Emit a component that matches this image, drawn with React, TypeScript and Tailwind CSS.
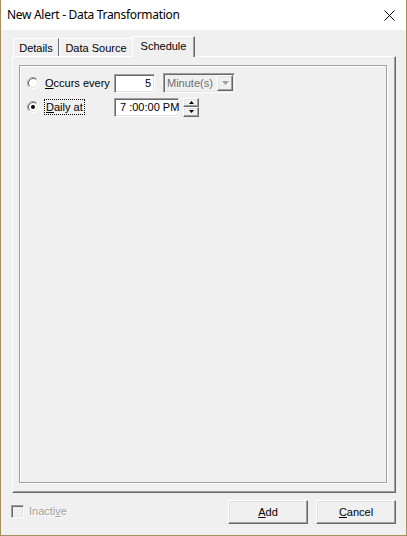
import React from "react";

const sunken =
  "border border-t-[#a0a0a0] border-l-[#a0a0a0] border-r-white border-b-white shadow-[inset_1px_1px_0_#696969,inset_-1px_-1px_0_#e3e3e3]";
const raised =
  "border border-t-white border-l-white border-r-[#696969] border-b-[#696969] shadow-[inset_-1px_-1px_0_#a0a0a0,inset_1px_1px_0_#e3e3e3]";

function Radio({ checked }: { checked?: boolean }) {
  return (
    <svg width="12" height="12" viewBox="0 0 12 12" className="shrink-0">
      <circle cx="6" cy="6" r="5" fill="#ffffff" />
      <path d="M2.11 9.89 A5.5 5.5 0 0 1 9.89 2.11" fill="none" stroke="#a0a0a0" strokeWidth="1" />
      <path d="M9.89 2.11 A5.5 5.5 0 0 1 2.11 9.89" fill="none" stroke="#ffffff" strokeWidth="1" />
      <path d="M2.82 9.18 A4.5 4.5 0 0 1 9.18 2.82" fill="none" stroke="#696969" strokeWidth="1" />
      <path d="M9.18 2.82 A4.5 4.5 0 0 1 2.82 9.18" fill="none" stroke="#e3e3e3" strokeWidth="1" />
      {checked && <circle cx="6" cy="6" r="2" fill="#000000" />}
    </svg>
  );
}

export default function App() {
  return (
    <div className="w-[407px] h-[536px] border-l border-r border-b border-[#a4905e] bg-[#f0f0f0] flex flex-col font-['Liberation_Sans',Arial,sans-serif] text-[11px] text-black overflow-hidden">
      {/* Title bar */}
      <div className="h-[30px] bg-white flex items-center justify-between pl-[6px] pr-[11px] shrink-0">
        <span className="font-['Noto_Sans',sans-serif] text-[12px] tracking-[-0.3px] leading-none">
          New Alert - Data Transformation
        </span>
        <svg width="11" height="11" viewBox="0 0 11 11">
          <path d="M0.5 0.5 L10.5 10.5 M10.5 0.5 L0.5 10.5" stroke="#000" strokeWidth="1" />
        </svg>
      </div>

      {/* Body */}
      <div className="flex-1 flex flex-col pl-[11px] pr-[10px] pt-[6px]">
        {/* Tabs */}
        <div className="h-[20px] flex items-end pl-[1px] whitespace-nowrap">
          <div className="w-[46px] h-[18px] border-t border-l border-white border-r border-r-[#696969] flex items-center justify-center pt-[1px]">
            Details
          </div>
          <div className="w-[73px] h-[18px] border-t border-l border-white flex items-center justify-center pt-[1px]">
            Data Source
          </div>
          <div className="relative z-10 w-[63px] h-[21px] -mb-[1px] bg-[#f0f0f0] border-t border-l border-white border-r border-r-[#696969] shadow-[inset_-1px_0_0_#a0a0a0] flex items-center justify-center pb-[1px]">
            Schedule
          </div>
        </div>

        {/* Panel */}
        <div className="w-[384px] h-[437px] border border-t-white border-l-white border-r-[#696969] border-b-[#696969] shadow-[inset_-1px_-1px_0_#a0a0a0] pl-[6px] pt-[8px] pr-[8px] pb-[9px] flex">
          <div className="flex-1 border border-[#a0a0a0] shadow-[1px_1px_0_#ffffff,inset_1px_1px_0_#ffffff] flex flex-col pt-[7px] pl-[7px] gap-[4px] whitespace-nowrap">
            {/* Row 1 */}
            <div className="flex items-center h-[20px]">
              <div className="w-[87px] flex items-center">
                <Radio />
                <span className="ml-[6px]">
                  <span className="underline">O</span>ccurs every
                </span>
              </div>
              <div className={`w-[41px] h-[19px] bg-white ${sunken} flex items-center justify-end pr-[3px]`}>5</div>
              <div className={`ml-[8px] w-[72px] h-[20px] ${sunken} flex items-center`}>
                <span className="pl-[3px] flex-1 text-[#6d6d6d]">Minute(s)</span>
                <div className={`w-[16px] h-[16px] mr-[1px] ${raised} flex items-center justify-center`}>
                  <svg width="7" height="4" viewBox="0 0 7 4">
                    <path d="M0 0 L7 0 L3.5 4 Z" fill="#a0a0a0" />
                  </svg>
                </div>
              </div>
            </div>
            {/* Row 2 */}
            <div className="flex items-center h-[20px]">
              <div className="w-[87px] flex items-center">
                <Radio checked />
                <span className="ml-[5px] border border-dotted border-black px-[1px] leading-[14px]">
                  <span className="underline">D</span>aily at
                </span>
              </div>
              <div className={`w-[65px] h-[19px] bg-white ${sunken} flex items-center pl-[5px]`}>
                7 :00:00 PM
              </div>
              <div className="ml-[4px] w-[16px] h-[19px] flex flex-col">
                <div className={`h-[9px] ${raised} flex items-center justify-center`}>
                  <svg width="5" height="3" viewBox="0 0 5 3">
                    <path d="M0 3 L5 3 L2.5 0 Z" fill="#000" />
                  </svg>
                </div>
                <div className={`h-[10px] ${raised} flex items-center justify-center`}>
                  <svg width="5" height="3" viewBox="0 0 5 3">
                    <path d="M0 0 L5 0 L2.5 3 Z" fill="#000" />
                  </svg>
                </div>
              </div>
            </div>
          </div>
        </div>

        {/* Bottom row */}
        <div className="mt-[7px] h-[24px] flex items-start">
          <div className="-ml-[1px] mt-[3px] flex items-center">
            <div className={`w-[13px] h-[13px] ${sunken} bg-[#f0f0f0]`} />
            <span className="ml-[5px] text-[#a0a0a0] [text-shadow:1px_1px_0_#ffffff]">
              Inacti<span className="underline">v</span>e
            </span>
          </div>
          <div className="ml-auto flex gap-[8px]">
            <div className={`w-[80px] h-[24px] ${raised} flex items-center justify-center`}>
              <span>
                <span className="underline">A</span>dd
              </span>
            </div>
            <div className={`w-[80px] h-[24px] ${raised} flex items-center justify-center`}>
              <span>
                <span className="underline">C</span>ancel
              </span>
            </div>
          </div>
        </div>
      </div>
    </div>
  );
}
